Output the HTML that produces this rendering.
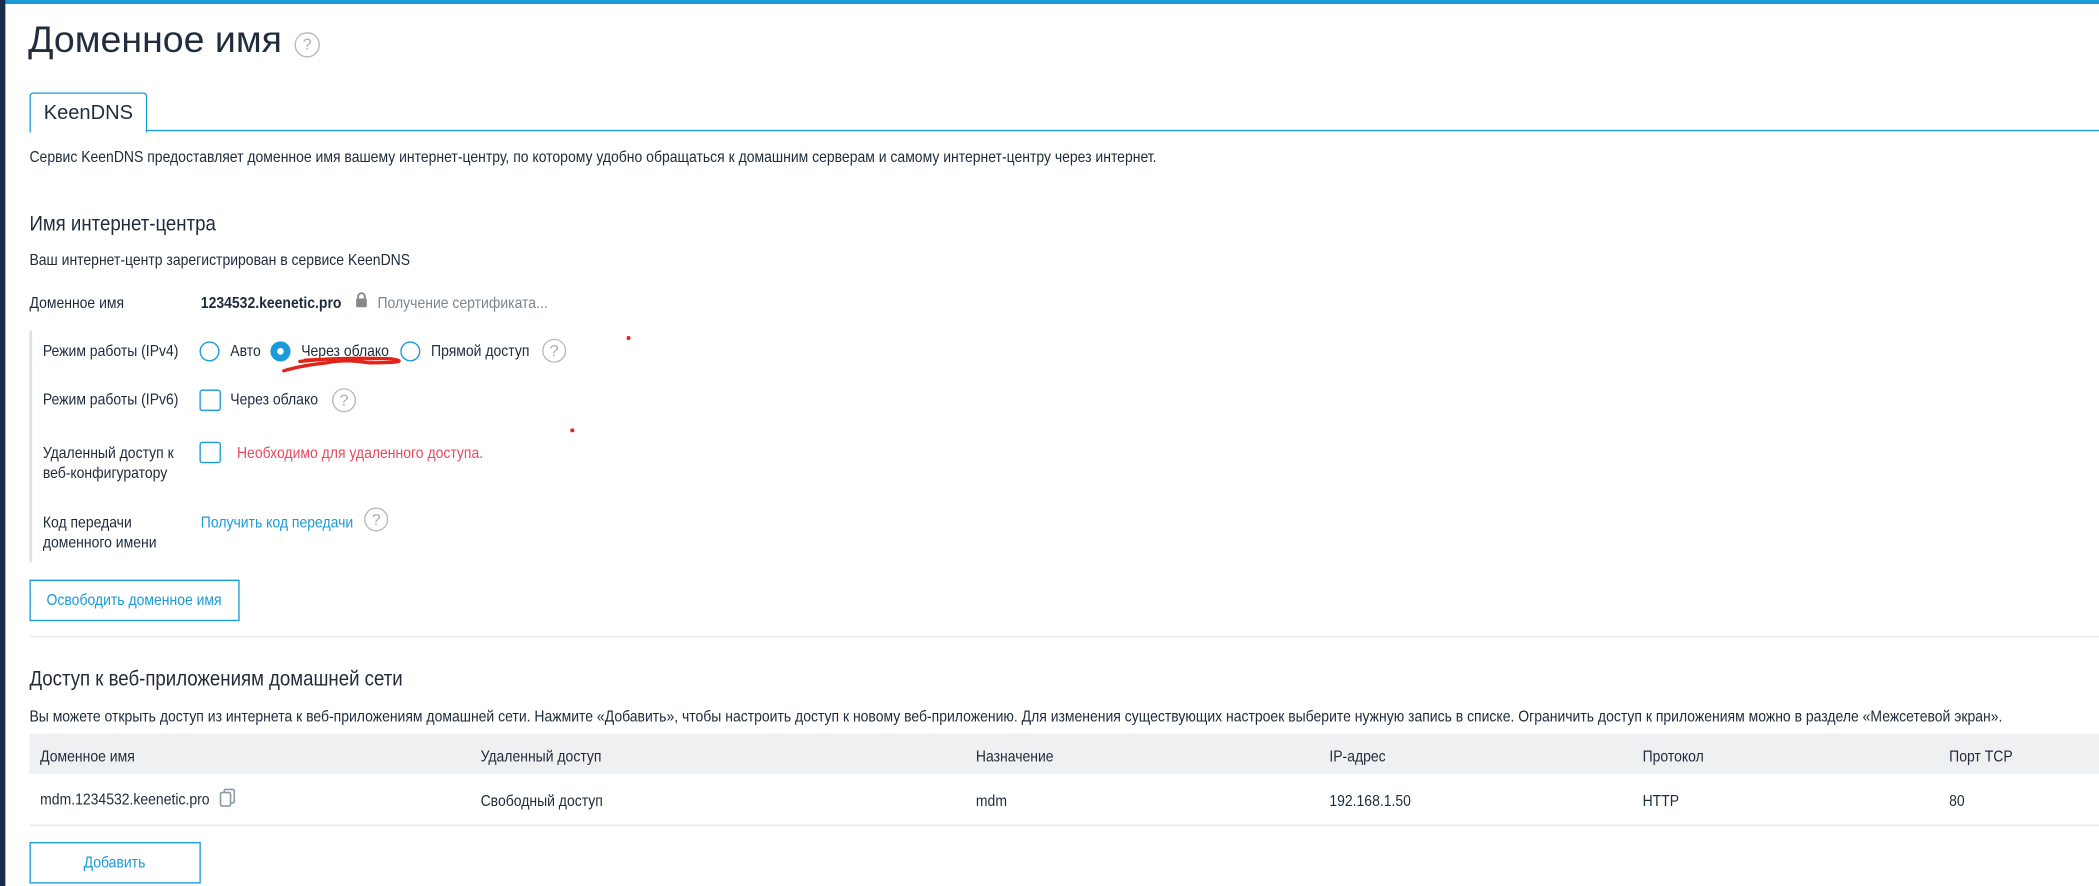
<!DOCTYPE html>
<html><head><meta charset="utf-8"><style>
html,body{margin:0;padding:0;width:2099px;height:886px;overflow:hidden;background:#fff}
#w{position:absolute;left:0;top:0;width:1568px;height:662px;transform:scale(1.3387);transform-origin:0 0;font-family:"Liberation Sans",sans-serif;color:#1f2a3a;font-size:12px}
.a{position:absolute;white-space:nowrap}
.c{transform:scaleX(.87);transform-origin:0 0}
.help{position:absolute;width:16px;height:16px;border:1.3px solid #b5b9bf;border-radius:50%;color:#a8adb3;font-size:12px;line-height:16px;text-align:center}
.rad{position:absolute;width:13px;height:13px;border:1.3px solid #1a9ad6;border-radius:50%}
.chk{position:absolute;width:14px;height:14px;border:1.3px solid #1a9ad6;border-radius:2px}
.btn{position:absolute;border:1px solid #1a9ad6;color:#1a9ad6;text-align:center;font-size:12px}
.btn span{display:inline-block;transform:scaleX(.87)}
</style></head><body><div id="w">
<div class="a" style="left:0;top:0;width:1568px;height:3px;background:#1a9ad6"></div>
<div class="a" style="left:0;top:0;width:4px;height:662px;background:#1b2a4a"></div>
<div class="a" style="left:21px;top:14px;font-size:28px;color:#1f2d3d">Доменное имя</div>
<div class="help" style="left:220px;top:24px;width:17px;height:17px;line-height:17px">?</div>
<div class="a" style="left:22px;top:69px;width:86px;height:29px;border:1px solid #1a9ad6;border-bottom:none;border-radius:3px 3px 0 0;background:#fff;font-size:15px;line-height:30px;text-align:center;color:#1f2d3d">KeenDNS</div>
<div class="a" style="left:109px;top:97px;width:1459px;height:1px;background:#1a9ad6"></div>
<div class="a c" style="left:22px;top:110px">Сервис KeenDNS предоставляет доменное имя вашему интернет-центру, по которому удобно обращаться к домашним серверам и самому интернет-центру через интернет.</div>
<div class="a c" style="left:22px;top:159px;font-size:16px">Имя интернет-центра</div>
<div class="a c" style="left:22px;top:187px">Ваш интернет-центр зарегистрирован в сервисе KeenDNS</div>
<div class="a c" style="left:22px;top:219px">Доменное имя</div>
<div class="a c" style="left:150px;top:219px;font-weight:bold">1234532.keenetic.pro</div>
<svg class="a" style="left:265px;top:218px" width="10" height="12" viewBox="0 0 10 12"><path d="M2.5 5V3.5a2.5 2.5 0 0 1 5 0V5" fill="none" stroke="#888" stroke-width="1.4"/><rect x="1" y="5" width="8" height="6.5" rx="1" fill="#888"/></svg>
<div class="a c" style="left:282px;top:219px;color:#7d858f">Получение сертификата...</div>
<div class="a" style="left:22px;top:247px;width:2px;height:173px;background:#dde0e3"></div>
<div class="a c" style="left:32px;top:255px">Режим работы (IPv4)</div>
<div class="rad" style="left:149px;top:255px"></div>
<div class="a c" style="left:172px;top:255px">Авто</div>
<div class="rad" style="left:202px;top:255px;background:#1a9ad6"><div style="position:absolute;left:4px;top:4px;width:5px;height:5px;border-radius:50%;background:#fff"></div></div>
<div class="a c" style="left:225px;top:255px">Через облако</div>
<div class="rad" style="left:299px;top:255px"></div>
<div class="a c" style="left:322px;top:255px">Прямой доступ</div>
<div class="help" style="left:405px;top:253px">?</div>
<svg class="a" style="left:200px;top:265px" width="110" height="20"><path d="M78 3 Q50 2 24 5 M28 4 Q60 2 92 3 Q110 6 75 6 Q58 3 44 6 Q25 8 12 12" fill="none" stroke="#e2231a" stroke-width="2.5" stroke-linecap="round"/></svg>
<div class="a" style="left:468px;top:251px;width:3px;height:3px;border-radius:50%;background:#e2231a"></div>
<div class="a" style="left:426px;top:320px;width:3px;height:3px;border-radius:50%;background:#e2231a"></div>
<div class="a c" style="left:32px;top:291px">Режим работы (IPv6)</div>
<div class="chk" style="left:149px;top:291px"></div>
<div class="a c" style="left:172px;top:291px">Через облако</div>
<div class="help" style="left:248px;top:290px">?</div>
<div class="a c" style="left:32px;top:331px;line-height:15px">Удаленный доступ к<br>веб-конфигуратору</div>
<div class="chk" style="left:149px;top:330px"></div>
<div class="a c" style="left:177px;top:331px;color:#e84a5f">Необходимо для удаленного доступа.</div>
<div class="a c" style="left:32px;top:383px;line-height:15px">Код передачи<br>доменного имени</div>
<div class="a c" style="left:150px;top:383px;color:#1a9ad6">Получить код передачи</div>
<div class="help" style="left:272px;top:379px">?</div>
<div class="btn" style="left:22px;top:433px;width:155px;height:29px;line-height:29px"><span>Освободить доменное имя</span></div>
<div class="a" style="left:22px;top:475px;width:1546px;height:1px;background:#e6e8ea"></div>
<div class="a c" style="left:22px;top:499px;font-size:16px">Доступ к веб-приложениям домашней сети</div>
<div class="a c" style="left:22px;top:528px">Вы можете открыть доступ из интернета к веб-приложениям домашней сети. Нажмите «Добавить», чтобы настроить доступ к новому веб-приложению. Для изменения существующих настроек выберите нужную запись в списке. Ограничить доступ к приложениям можно в разделе «Межсетевой экран».</div>
<div class="a" style="left:22px;top:548px;width:1546px;height:30px;background:#eef0f2"></div>
<div class="a c" style="left:30px;top:558px">Доменное имя</div>
<div class="a c" style="left:359px;top:558px">Удаленный доступ</div>
<div class="a c" style="left:729px;top:558px">Назначение</div>
<div class="a c" style="left:993px;top:558px">IP-адрес</div>
<div class="a c" style="left:1227px;top:558px">Протокол</div>
<div class="a c" style="left:1456px;top:558px">Порт TCP</div>
<div class="a c" style="left:30px;top:590px">mdm.1234532.keenetic.pro</div>
<svg class="a" style="left:164px;top:589px" width="12" height="14"><rect x="3.5" y="0.7" width="7.5" height="10" rx="1" fill="#fff" stroke="#8a9aae" stroke-width="1.2"/><rect x="0.7" y="3" width="7.5" height="10" rx="1" fill="#fff" stroke="#8a9aae" stroke-width="1.2"/></svg>
<div class="a c" style="left:359px;top:591px">Свободный доступ</div>
<div class="a c" style="left:729px;top:591px">mdm</div>
<div class="a c" style="left:993px;top:591px">192.168.1.50</div>
<div class="a c" style="left:1227px;top:591px">HTTP</div>
<div class="a c" style="left:1456px;top:591px">80</div>
<div class="a" style="left:22px;top:616px;width:1546px;height:1px;background:#e6e8ea"></div>
<div class="btn" style="left:22px;top:629px;width:126px;height:29px;line-height:29px"><span>Добавить</span></div>
</div></body></html>
